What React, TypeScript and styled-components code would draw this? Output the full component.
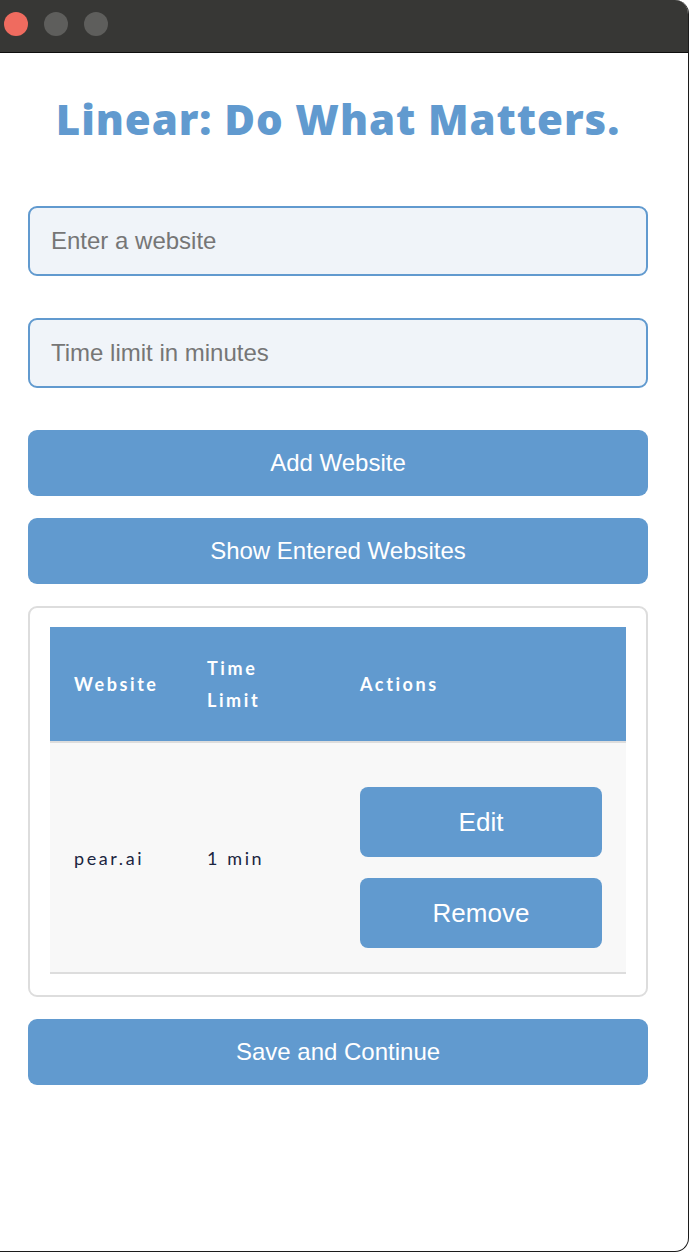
import React from "react";
import styled, { createGlobalStyle } from "styled-components";

const Global = createGlobalStyle`
  html, body { margin: 0; padding: 0; background: #ffffff; }
  body { font-family: "Liberation Sans", Arial, sans-serif; }
  * { box-sizing: border-box; }
`;

const BLUE = "#619acf";

const Window = styled.div`
  width: 689px;
  height: 1252px;
  background: #ffffff;
  border-right: 1px solid #1c1c1c;
  border-bottom: 1px solid #1c1c1c;
  border-radius: 0 14px 14px 0;
  overflow: hidden;
  display: flex;
  flex-direction: column;
`;

const TitleBar = styled.div`
  height: 53px;
  flex: none;
  background: #373735;
  border-bottom: 1px solid #0e0e0e;
  display: flex;
  align-items: center;
  gap: 16px;
  padding: 0 0 4px 4px;
`;

const Light = styled.span<{ $color: string }>`
  width: 24px;
  height: 24px;
  border-radius: 50%;
  background: ${(p) => p.$color};
`;

const Content = styled.main`
  padding: 42px 42px 0 28px;
  display: flex;
  flex-direction: column;
`;

const Title = styled.h1`
  width: 620px;
  margin: 0 0 63px;
  text-align: center;
  font-family: "Open Sans", sans-serif;
  font-weight: 800;
  font-size: 42px;
  letter-spacing: 0.9px;
  line-height: 48px;
  color: ${BLUE};
  white-space: nowrap;
`;

const Input = styled.input`
  width: 620px;
  height: 70px;
  border: 2px solid ${BLUE};
  border-radius: 9px;
  background: #f0f4f9;
  padding: 0 21px;
  font-family: "Liberation Sans", Arial, sans-serif;
  font-size: 24px;
  color: #333;
  margin-bottom: 42px;
  outline: none;
  &::placeholder { color: #767676; }
`;

const Button = styled.button<{ $size?: number }>`
  width: 100%;
  height: 66px;
  border: none;
  border-radius: 9px;
  background: ${BLUE};
  color: #ffffff;
  font-family: "Liberation Sans", Arial, sans-serif;
  font-size: ${(p) => p.$size ?? 24}px;
  cursor: pointer;
`;

const Stack = styled.div`
  width: 620px;
  display: flex;
  flex-direction: column;
  gap: 22px;
`;

const Card = styled.section`
  border: 2px solid #dddddd;
  border-radius: 9px;
  padding: 19px 20px 21px;
`;

const Table = styled.table`
  width: 100%;
  table-layout: fixed;
  border-collapse: collapse;
  font-family: "Comic Sans MS", "Lato", "Noto Sans", sans-serif;
`;

const Th = styled.th<{ $w: number }>`
  width: ${(p) => p.$w}px;
  background: ${BLUE};
  color: #ffffff;
  text-align: left;
  font-weight: 700;
  font-size: 18px;
  letter-spacing: 2.6px;
  line-height: 32px;
  padding: 25px 24px;
  border-bottom: 2px solid #dddddd;
`;

const Row = styled.tr`
  background: #f8f8f8;
  border-bottom: 2px solid #dddddd;
`;

const Td = styled.td`
  padding: 24px;
  vertical-align: middle;
  font-size: 18px;
  letter-spacing: 2.6px;
  color: #1b2540;
`;

const Actions = styled.div`
  display: flex;
  flex-direction: column;
  gap: 21px;
  padding-top: 20px;
`;

const ActionButton = styled(Button)`
  height: 70px;
  border-radius: 8px;
`;

export default function App() {
  return (
    <>
      <Global />
      <Window>
        <TitleBar>
          <Light $color="#ef6b5f" />
          <Light $color="#5e5e5c" />
          <Light $color="#5e5e5c" />
        </TitleBar>
        <Content>
          <Title>Linear: Do What Matters.</Title>
          <Input placeholder="Enter a website" />
          <Input placeholder="Time limit in minutes" />
          <Stack>
            <Button>Add Website</Button>
            <Button>Show Entered Websites</Button>
            <Card>
              <Table>
                <thead>
                  <tr>
                    <Th $w={133}>Website</Th>
                    <Th $w={153}>Time Limit</Th>
                    <Th $w={290}>Actions</Th>
                  </tr>
                </thead>
                <tbody>
                  <Row>
                    <Td>pear.ai</Td>
                    <Td>1 min</Td>
                    <Td>
                      <Actions>
                        <ActionButton $size={26}>Edit</ActionButton>
                        <ActionButton $size={26}>Remove</ActionButton>
                      </Actions>
                    </Td>
                  </Row>
                </tbody>
              </Table>
            </Card>
            <Button>Save and Continue</Button>
          </Stack>
        </Content>
      </Window>
    </>
  );
}
